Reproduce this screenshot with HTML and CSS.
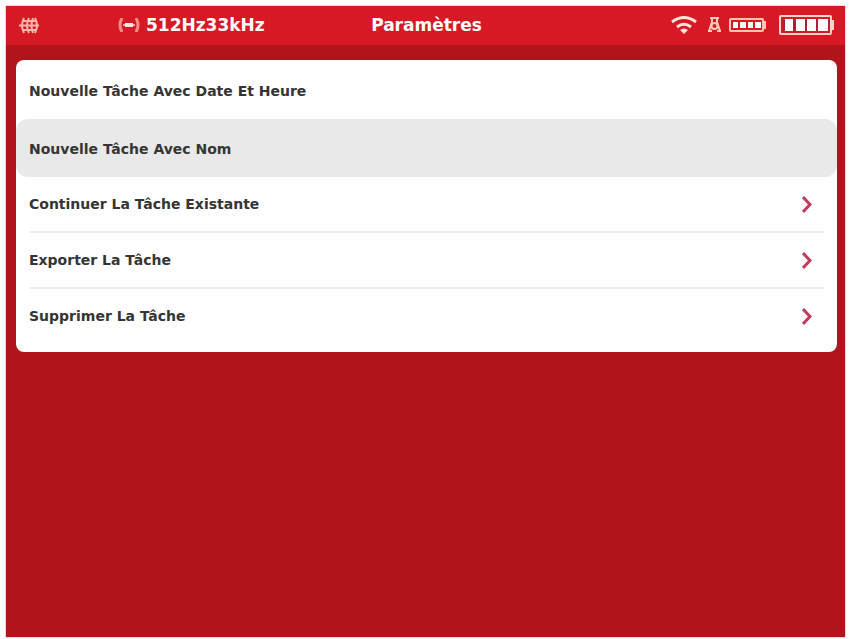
FILE: index.html
```html
<!DOCTYPE html>
<html lang="fr">
<head>
  <meta charset="UTF-8">
  <meta name="viewport" content="width=device-width, initial-scale=1.0">
  <title>Paramètres</title>
  <link rel="stylesheet" href="styles.css">
</head>
<body>
  <div class="screen">
    <!-- Status bar -->
    <header class="status-bar">
      <div class="status-left">
        <svg class="icon" width="20" height="17" viewBox="0 0 20 17" aria-hidden="true">
          <g fill="none" stroke="#fbb5aa" stroke-width="2">
            <path d="M0 8.5h20M3 4h14M3 13h14"/>
            <path d="M5 1Q1 8.5 5 16M10 1Q6 8.5 10 16M14 1Q11 8.5 14 16M16 1Q20 8.5 16 16"/>
          </g>
        </svg>
        <div class="frequency">
          <svg class="icon" width="22" height="14" viewBox="0 0 22 14" aria-hidden="true">
            <g fill="none" stroke="#f58d86" stroke-width="3">
              <path d="M4 0Q0 7 4 14M18 0Q22 7 18 14"/>
            </g>
            <path d="M5 7h12" stroke="#f9b0a6" stroke-width="2"/>
            <path d="M7 7h8" stroke="#ffe6dc" stroke-width="4"/>
          </svg>
          <span>512Hz33kHz</span>
        </div>
      </div>

      <h1 class="title">Paramètres</h1>

      <div class="status-right">
        <svg class="icon" width="26" height="18" viewBox="0 0 26 18" aria-hidden="true">
          <g fill="none" stroke="#ffe3d5" stroke-width="3">
            <path d="M1 6Q13-3 25 6"/>
            <path d="M6 11Q13 5.5 20 11"/>
          </g>
          <path d="M9 14Q13 11 17 14L13 18Z" fill="#ffe3d5"/>
        </svg>
        <svg class="icon locator" width="15" height="16" viewBox="0 0 15 16" aria-hidden="true">
          <g fill="none" stroke="#ffc9b8" stroke-width="2">
            <path d="M3 1h9M5 1v4M10 1v4M5 5L2 14H1M10 5l3 9h1"/>
            <circle cx="7.5" cy="9" r="3"/>
            <path d="M1 14h4M10 14h4"/>
          </g>
        </svg>
        <svg class="icon" width="37" height="14" viewBox="0 0 37 14" aria-hidden="true">
          <rect x="1" y="1" width="33" height="12" rx="1" fill="none" stroke="#ffc3b4" stroke-width="2"/>
          <path d="M36 3v8" stroke="#ffc3b4" stroke-width="2"/>
          <path d="M4 4h5v6H4zM11 4h6v6h-6zM19 4h5v6h-5zM26 4h6v6h-6z" fill="#fff"/>
        </svg>
        <svg class="icon battery" width="55" height="20" viewBox="0 0 55 20" aria-hidden="true">
          <rect x="1" y="1" width="51" height="18" rx="1" fill="none" stroke="#ffd3c8" stroke-width="2"/>
          <path d="M54 5v10" stroke="#ffd3c8" stroke-width="2"/>
          <path d="M4 4h46v12H4z" fill="#a92237"/>
          <path d="M6 4h8v12H6zM17 4h9v12h-9zM28 4h9v12h-9zM39 4h10v12H39z" fill="#fff"/>
        </svg>
      </div>
    </header>

    <!-- Task menu -->
    <main class="menu">
      <button type="button" class="menu-item">Nouvelle Tâche Avec Date Et Heure</button>
      <button type="button" class="menu-item selected">Nouvelle Tâche Avec Nom</button>
      <button type="button" class="menu-item link">
        Continuer La Tâche Existante
        <svg class="chevron" width="10" height="17" viewBox="0 0 10 17" aria-hidden="true"><path d="M1 1l7 7.5-7 7.5"/></svg>
      </button>
      <button type="button" class="menu-item link">
        Exporter La Tâche
        <svg class="chevron" width="10" height="17" viewBox="0 0 10 17" aria-hidden="true"><path d="M1 1l7 7.5-7 7.5"/></svg>
      </button>
      <button type="button" class="menu-item link">
        Supprimer La Tâche
        <svg class="chevron" width="10" height="17" viewBox="0 0 10 17" aria-hidden="true"><path d="M1 1l7 7.5-7 7.5"/></svg>
      </button>
    </main>
  </div>
</body>
</html>
```
FILE: styles.css
```css
* {
  box-sizing: border-box;
}

body {
  margin: 0;
  padding: 6px 6px 2px;
  min-height: 100vh;
  display: flex;
  background-color: #ffffff;
  font-family: "DejaVu Sans", Verdana, sans-serif;
  font-weight: bold;
}

/* Red device screen */
.screen {
  flex: 1;
  background-color: #b2141b;
  box-shadow: 0 0 1px #b2141b;
}

/* Status bar */
.status-bar {
  display: grid;
  grid-template-columns: 1fr auto 1fr;
  align-items: center;
  padding: 9px 11px 10px 13px;
  background-color: #d71925;
  color: #ffffff;
  font-size: 17px;
  line-height: 20px;
}

.icon {
  display: block;
  flex: none;
}

.status-left {
  display: flex;
  align-items: center;
  gap: 79px;
}

.frequency {
  display: flex;
  align-items: center;
  gap: 6px;
}

.title {
  margin: 0;
  font-size: 17px;
}

.status-right {
  display: flex;
  align-items: center;
  justify-content: flex-end;
}

.locator {
  margin: 0 7px 0 10px;
}

.battery {
  margin-left: 13px;
}

/* White card with the task actions */
.menu {
  display: flex;
  flex-direction: column;
  margin: 15px 8px 0 10px;
  padding: 1px 0 7px;
  border-radius: 8px;
  background-color: #ffffff;
  overflow: hidden;
}

.menu-item {
  display: flex;
  align-items: center;
  justify-content: space-between;
  height: 58px;
  padding: 2px 13px 0;
  border: none;
  background-color: transparent;
  color: #353535;
  font: inherit;
  font-size: 14px;
  text-align: left;
  cursor: pointer;
}

.menu-item.selected {
  border-radius: 12px;
  background-color: #e9e9e9;
}

/* Rows that open another page */
.menu-item.link {
  height: 56px;
  margin: 0 13px;
  padding: 0 12px 0 0;
  border-bottom: 2px solid #ebebeb;
}

.menu-item.link:last-child {
  border-bottom-color: transparent;
}

.chevron {
  flex: none;
  fill: none;
  stroke: #c33a5c;
  stroke-width: 3;
}
```
